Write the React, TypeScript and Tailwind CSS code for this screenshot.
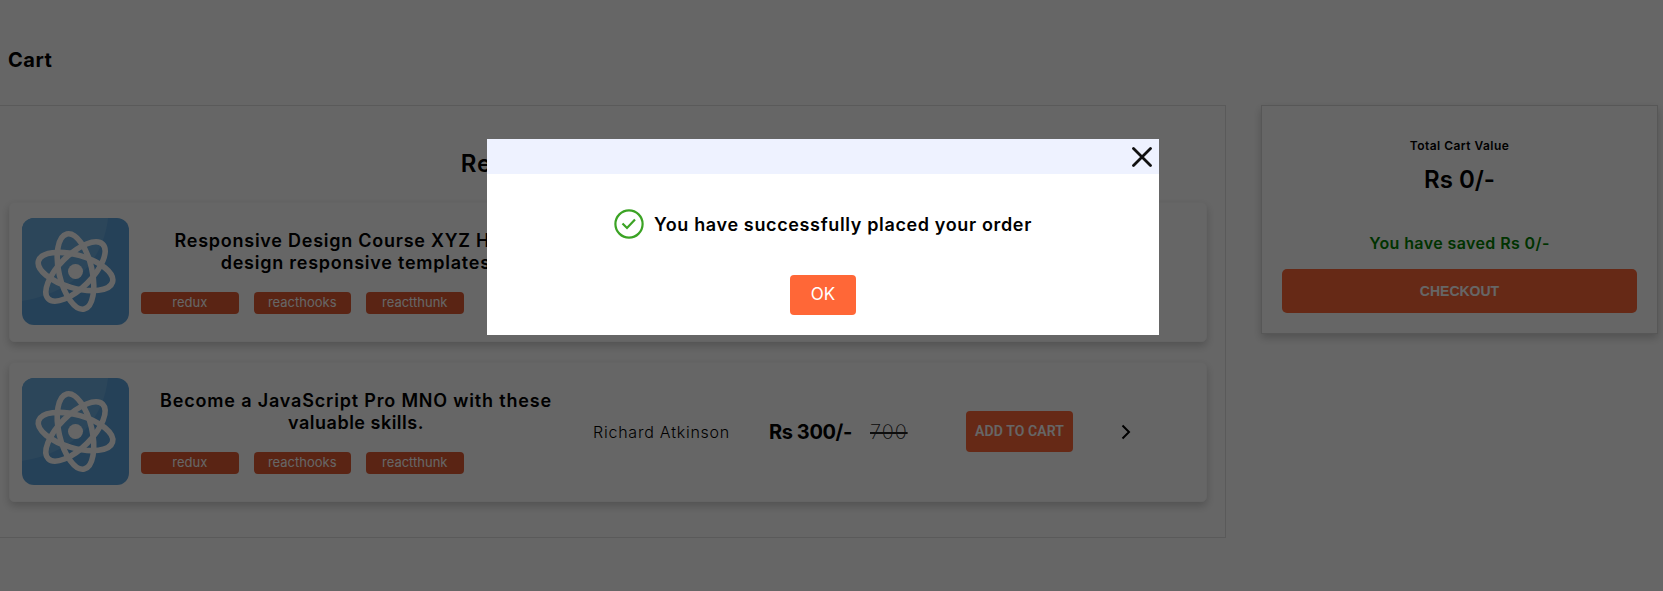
import React from "react";

const ELLIPSES = [16, 77, 135];
const TAGS = ["redux", "reacthooks", "reactthunk"];

function ReactLogo() {
  return (
    <svg viewBox="0 0 107 107" className="block h-[107px] w-[107px] shrink-0 rounded-[12px]">
      <rect width="107" height="107" fill="#5da3dc" />
      <path d="M0 0H86C82 38 56 74 0 83Z" fill="#6eafe1" />
      {ELLIPSES.map((a) => (
        <ellipse key={a} cx="53.5" cy="53.5" rx="38.500" ry="16.500" fill="none" stroke="#fff" strokeWidth="5.600" transform={`rotate(${a} 53.5 53.5)`} />
      ))}
      <circle cx="53.5" cy="53.5" r="7.5" fill="#fff" />
    </svg>
  );
}

function CourseCard({ title, spacing }: { title: string[]; spacing: string[] }) {
  return (
    <article className="flex h-[140px] w-[1198px] items-center rounded-[5px] border border-[#fafafa] bg-white pb-px pl-[12px] shadow-[0_4px_8px_0_rgba(0,0,0,0.2)]">
      <ReactLogo />
      <div className="ml-3 flex w-[430px] flex-col">
        <h2 className="mt-px flex flex-col text-center text-[18px] leading-[22px] font-semibold whitespace-nowrap">
          <span className={spacing[0]}>{title[0]}</span>
          <span className={spacing[1]}>{title[1]}</span>
        </h2>
        <div className="mt-[18px] flex gap-[15px]">
          {TAGS.map((t) => (
            <span key={t} className="h-[22px] w-[97.5px] rounded-[4px] bg-[#e15b34] text-center text-[13px] leading-[21px] text-white">
              {t}
            </span>
          ))}
        </div>
      </div>
      <span className="ml-[22px] w-[176px] text-[16px] font-light tracking-[0.77px] whitespace-nowrap">Richard Atkinson</span>
      <span className="w-[101px] text-[20px] font-bold tracking-[-0.4px] whitespace-nowrap">Rs 300/-</span>
      <span className="w-[96px] text-[20px] font-extralight text-[#222]">
        <span className="tracking-[0.9px] line-through">700</span>
      </span>
      <button className="h-[41px] w-[107px] rounded-[4px] bg-[#ff6737] font-['Roboto',sans-serif] text-[14px] font-semibold tracking-[0.1px] whitespace-nowrap text-white">
        ADD TO CART
      </button>
      <svg viewBox="0 0 10 16" className="ml-[48px] h-4 w-[10px]" fill="none" stroke="#000" strokeWidth="2">
        <path d="M1.500 1.500 8 8l-6.500 6.500" />
      </svg>
    </article>
  );
}

export default function App() {
  return (
    <div className="relative h-[591px] w-[1663px] overflow-hidden bg-white font-['Inter',sans-serif] text-black">
      <h1 className="h-[105px] pt-[48px] pl-[8px] text-[20px] leading-[24px] font-bold tracking-[0.5px]">Cart</h1>
      <div className="flex items-start">
        <main className="h-[433px] w-[1226px] border border-l-0 border-[#e0e0e0] pl-[9px]">
          <h2 className="mt-[43px] w-[1198px] text-center text-[24px] leading-[30px] font-semibold tracking-[0.9px]">Recommended Courses</h2>
          <div className="mt-[23px] flex flex-col gap-5">
            <CourseCard
              title={["Responsive Design Course XYZ How to", "design responsive templates."]}
              spacing={["pl-[4px] tracking-[0.75px]", "pl-[6px] tracking-[0.75px]"]}
            />
            <CourseCard
              title={["Become a JavaScript Pro MNO with these", "valuable skills."]}
              spacing={["tracking-[0.82px]", "tracking-[0.5px]"]}
            />
          </div>
        </main>
        <aside className="ml-[35px] flex h-[229px] w-[397px] flex-col items-center border border-[#dadada] bg-white px-5 shadow-[0_4px_8px_0_rgba(0,0,0,0.2)]">
          <p className="mt-[32px] text-[12px] leading-[16px] font-semibold tracking-[0.46px]">Total Cart Value</p>
          <p className="mt-[12px] text-[24px] leading-[28px] font-semibold">Rs 0/-</p>
          <p className="mt-[39px] text-[16px] leading-[20px] font-semibold tracking-[0.4px] text-[#008000]">You have saved Rs 0/-</p>
          <button className="mt-[16px] h-[44px] w-full rounded-[5px] bg-[#ff6737] font-['Liberation_Sans',sans-serif] text-[14px] font-bold text-white">CHECKOUT</button>
        </aside>
      </div>
      <div className="absolute inset-0 flex items-start bg-black/60 pt-[139px] pl-[487px]">
        <section className="flex h-[196px] w-[672px] flex-col items-center bg-white">
          <header className="flex h-[35px] w-full items-center justify-end bg-[#eef2ff] pr-[7px]">
            <svg viewBox="0 0 20 20" className="h-5 w-5" stroke="#111" strokeWidth="2.800" strokeLinecap="round">
              <path d="M1.500 1.500 18.500 18.500M18.500 1.500 1.500 18.500" />
            </svg>
          </header>
          <div className="mt-[35px] flex h-[30px] items-center gap-[10px]">
            <svg viewBox="0 0 30 30" className="h-[30px] w-[30px]" fill="none" stroke="#3ba324" strokeWidth="2.200">
              <circle cx="15" cy="15" r="13.600" />
              <path d="M8.500 14.500 13 19 21 10.500" />
            </svg>
            <p className="pt-px text-[18px] leading-[22px] font-semibold tracking-[0.64px] whitespace-nowrap">You have successfully placed your order</p>
          </div>
          <button className="mt-[36px] h-[40px] w-[66px] rounded-[4px] bg-[#ff6737] text-[17px] text-white">OK</button>
        </section>
      </div>
    </div>
  );
}
